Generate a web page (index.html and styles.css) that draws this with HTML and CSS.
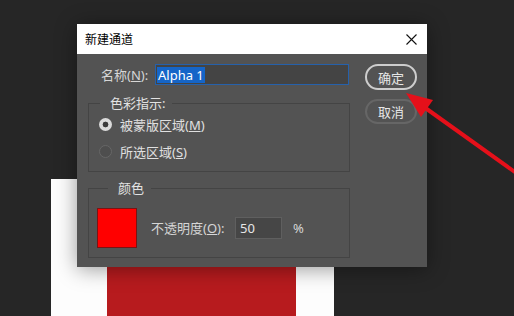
FILE: index.html
```html
<!DOCTYPE html>
<html lang="zh-CN">
<head>
<meta charset="utf-8">
<title>新建通道</title>
<link rel="stylesheet" href="styles.css">
</head>
<body>
<div class="workspace">
  <div class="canvas"><div class="canvas-fill"></div></div>
</div>

<div class="dialog">
  <div class="titlebar">
    <span class="title">新建通道</span>
    <svg class="close" width="11" height="11" viewBox="0 0 11 11" aria-hidden="true">
      <path d="M0.5 0.5 L10.5 10.5 M10.5 0.5 L0.5 10.5" stroke="#111" stroke-width="1.1" fill="none"/>
    </svg>
  </div>
  <div class="dialog-body">
    <div class="fields">
      <div class="name-row">
        <span class="name-label">名称(<u>N</u>):</span>
        <div class="text-input name-input"><span class="selected">Alpha 1</span></div>
      </div>

      <fieldset class="group group-indicate">
        <legend>色彩指示:</legend>
        <div class="radio-row"><span class="radio checked"></span><span>被蒙版区域(<u>M</u>)</span></div>
        <div class="radio-row"><span class="radio"></span><span>所选区域(<u>S</u>)</span></div>
      </fieldset>

      <fieldset class="group group-color">
        <legend>颜色</legend>
        <div class="color-row">
          <span class="swatch"></span>
          <span class="op-label">不透明度(<u>O</u>):</span>
          <div class="text-input op-input">50</div>
          <span class="pct">%</span>
        </div>
      </fieldset>
    </div>

    <div class="buttons">
      <button class="btn btn-ok">确定</button>
      <button class="btn btn-cancel">取消</button>
    </div>
  </div>
</div>

<svg class="arrow" width="514" height="316" viewBox="0 0 514 316" aria-hidden="true">
  <line x1="424" y1="107" x2="540" y2="190" stroke="#e5101a" stroke-width="4"/>
  <polygon points="406,93 433,100 421,117" fill="#e5101a"/>
</svg>
</body>
</html>
```

FILE: styles.css
```css
html, body {
  margin: 0;
  padding: 0;
}

body {
  position: relative;
  width: 514px;
  height: 316px;
  overflow: hidden;
  background: #262626;
  font-family: "Noto Sans", "Noto Sans CJK SC", sans-serif;
  font-size: 13px;
  line-height: 16px;
  color: #dedede;
}

.workspace {
  padding: 179px 0 0 51px;
}

.canvas {
  width: 283px;
  height: 137px;
  background: #fdfdfd;
}

.canvas-fill {
  margin-left: 56px;
  width: 189px;
  height: 100%;
  background: #b71b1e;
}

.dialog {
  position: absolute;
  left: 77px;
  top: 24px;
  width: 350px;
  height: 243px;
  background: #535353;
  box-shadow: 0 2px 20px rgba(0, 0, 0, 0.4);
}

.titlebar {
  height: 30px;
  background: #ffffff;
  display: flex;
  align-items: center;
  justify-content: space-between;
  padding: 0 10px 0 8px;
}

.title {
  font-family: "Noto Sans CJK SC", sans-serif;
  font-size: 12px;
  color: #000;
}

.close {
  display: block;
}

.dialog-body {
  display: grid;
  grid-template-columns: 262px 52px;
  column-gap: 15px;
  padding: 10px 10px 0 11px;
}

.name-row {
  display: flex;
  align-items: center;
  height: 21px;
  padding-left: 13px;
}

.name-label {
  width: 54px;
  color: #d6d6d6;
}

.text-input {
  box-sizing: border-box;
  display: flex;
  align-items: center;
}

.name-input {
  width: 194px;
  height: 21px;
  background: #444444;
  border: 1px solid #2661ab;
  padding-left: 1px;
}

.selected {
  background: #1565c8;
  color: #ffffff;
  height: 16px;
  line-height: 16px;
  padding: 0 1px;
}

.group {
  margin: 10px 0 0;
  padding: 0;
  border: 1px solid #444444;
  min-width: 0;
}

.group legend {
  margin-left: 11px;
  padding: 0 7px 0 10px;
  line-height: 16px;
  color: #e2e2e2;
}

.group-indicate {
  padding-bottom: 6px;
}

.radio-row {
  display: flex;
  align-items: center;
  gap: 8px;
  height: 27px;
  padding-left: 10px;
  color: #e0e0e0;
}

.radio {
  box-sizing: border-box;
  width: 13px;
  height: 13px;
  border-radius: 50%;
  border: 1.5px solid #676767;
  background: #4e4e4e;
}

.radio.checked {
  border: none;
  background: radial-gradient(circle, #3a3a3a 0 2.6px, #dadada 3.2px);
}

.group-color {
  margin-top: 8px;
  padding: 0 0 9px 8px;
}

.color-row {
  display: flex;
  align-items: center;
  padding-top: 12px;
}

.swatch {
  box-sizing: border-box;
  width: 40px;
  height: 40px;
  background: #ff0000;
  border: 1px solid #7a1414;
}

.op-label {
  margin-left: 14px;
  width: 84px;
  color: #d6d6d6;
}

.op-input {
  width: 47px;
  height: 22px;
  background: #464646;
  border: 1px solid #5f5f5f;
  padding-left: 4px;
  color: #e6e6e6;
}

.pct {
  margin-left: 11px;
  color: #d6d6d6;
}

.buttons {
  display: flex;
  flex-direction: column;
  gap: 9px;
}

.btn {
  box-sizing: border-box;
  width: 52px;
  padding: 0;
  background: transparent;
  border-radius: 13px;
  font-family: "Noto Sans CJK SC", sans-serif;
  font-size: 13px;
  color: #e6e6e6;
}

.btn-ok {
  height: 26px;
  border: 2px solid #cdcdcd;
}

.btn-cancel {
  height: 25px;
  border: 2px solid #666666;
}

.arrow {
  position: absolute;
  left: 0;
  top: 0;
  pointer-events: none;
}
```
